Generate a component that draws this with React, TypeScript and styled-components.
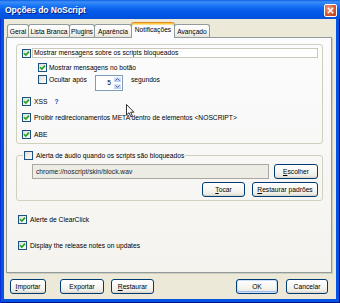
import React from "react";
import styled, { createGlobalStyle } from "styled-components";

const FONT = `"Liberation Sans", Arial, sans-serif`;

const GlobalStyle = createGlobalStyle`
  html, body { margin: 0; padding: 0; background: #ffffff; }
  body { font-family: ${FONT}; }
  *, *::before, *::after { box-sizing: border-box; }
`;

const Window = styled.div`
  position: relative;
  width: 340px;
  height: 303px;
  display: flex;
  flex-direction: column;
  background: #0553e2;
  box-shadow: inset 1px 0 0 #0831d9, inset -1px 0 0 #00138c, inset 0 -1px 0 #00138c;
  font-family: ${FONT};
  font-size: 6.7px;
  color: #000;
  overflow: hidden;
`;

const TitleBar = styled.div`
  height: 19px;
  flex: none;
  display: flex;
  align-items: center;
  justify-content: space-between;
  padding: 0 3px 0 5px;
  background: linear-gradient(
    to bottom,
    #0a5fe6 0%,
    #3d8ef7 10%,
    #1d78f5 28%,
    #0960ec 50%,
    #0156e6 75%,
    #0150d8 100%
  );
`;

const Title = styled.span`
  color: #ffffff;
  font-weight: bold;
  font-size: 8.6px;
  letter-spacing: -0.1px;
  text-shadow: 1px 1px 0 #0a1883;
`;

const CloseButton = styled.div`
  width: 13px;
  height: 13px;
  margin-top: 1px;
  border: 1px solid #ffffff;
  border-radius: 2px;
  background: radial-gradient(circle at 35% 30%, #f09a7c 0%, #d75a35 55%, #b63b18 100%);
  display: flex;
  align-items: center;
  justify-content: center;
`;

const Body = styled.div`
  flex: 1;
  margin: 0 4px 4px;
  padding: 3px 4px 0 2px;
  background: #ece9d8;
  display: flex;
  flex-direction: column;
`;

const TabRow = styled.div`
  height: 15px;
  display: flex;
  align-items: flex-end;
  padding-left: 1px;
  position: relative;
  z-index: 1;
`;

const Tab = styled.div<{ $active?: boolean; $w: number }>`
  width: ${(p) => p.$w}px;
  height: ${(p) => (p.$active ? 16 : 13)}px;
  margin-bottom: ${(p) => (p.$active ? -1 : 0)}px;
  margin-right: -1px;
  display: flex;
  align-items: center;
  justify-content: center;
  padding-bottom: ${(p) => (p.$active ? 3 : 0)}px;
  border: 1px solid #919b9c;
  border-bottom: none;
  border-top-color: ${(p) => (p.$active ? "#e68b2c" : "#919b9c")};
  border-radius: 3px 3px 0 0;
  background: ${(p) =>
    p.$active ? "#fcfcfe" : "linear-gradient(to bottom, #ffffff, #f3f2ec 70%, #e6e4da)"};
  box-shadow: ${(p) => (p.$active ? "inset 0 1px 0 #ffc83c, inset 0 2px 0 #ffdf92" : "none")};
  white-space: nowrap;
  position: relative;
  z-index: ${(p) => (p.$active ? 2 : 1)};
`;

const Panel = styled.div`
  height: 236px;
  flex: none;
  border: 1px solid #919b9c;
  background: linear-gradient(to bottom, #fcfcfe, #f4f3ee);
  box-shadow: 1px 1px 0 #d0cebf;
  padding: 6px 8px 0 9px;
  display: flex;
  flex-direction: column;
`;

const Group = styled.div`
  height: 100px;
  flex: none;
  border: 1px solid #d0d0bf;
  border-radius: 3px;
  padding: 3px 4px 0 5px;
  display: flex;
  flex-direction: column;
`;

const FieldGroup = styled.fieldset`
  margin: 7px 0 0 0;
  min-width: 0;
  border: 1px solid #d0d0bf;
  border-radius: 3px;
  padding: 4px 4px 3px 6px;
  display: flex;
  flex-direction: column;
`;

const Legend = styled.legend`
  padding: 0 1px;
  display: flex;
  align-items: center;
  gap: 3px;
  height: 9px;
  line-height: 9px;
  white-space: nowrap;
`;

const FieldBody = styled.div`
  padding-left: 9px;
  display: flex;
  flex-direction: column;
  gap: 3px;
`;

const Row = styled.div<{ $mt?: number; $ml?: number; $top?: boolean; $end?: boolean; $gap?: number }>`
  display: flex;
  align-items: ${(p) => (p.$top ? "flex-start" : "center")};
  justify-content: ${(p) => (p.$end ? "flex-end" : "flex-start")};
  gap: ${(p) => p.$gap ?? 3}px;
  margin-top: ${(p) => p.$mt ?? 0}px;
  margin-left: ${(p) => p.$ml ?? 0}px;
  min-height: 9px;
  line-height: 9px;
  white-space: nowrap;
`;

const CaptionBox = styled.div`
  flex: 1;
  height: 10px;
  margin-left: 1px;
  border: 1px solid #cac8bb;
  background: #ffffff;
  line-height: 8px;
  padding-left: 1px;
  white-space: nowrap;
`;

const Label = styled.span`
  line-height: 9px;
`;

const Help = styled.span`
  margin-left: 4px;
  color: #1a3fc4;
  font-weight: bold;
  line-height: 9px;
`;

const Box = styled.span`
  width: 9px;
  height: 9px;
  flex: none;
  border: 1px solid #1c5180;
  background: linear-gradient(135deg, #dcdcd7 0%, #ffffff 100%);
  display: flex;
  align-items: center;
  justify-content: center;
`;

const Spinner = styled.div`
  width: 28px;
  height: 16px;
  margin-left: 6px;
  flex: none;
  border: 1px solid #7f9db9;
  background: #ffffff;
  display: flex;
`;

const SpinValue = styled.span`
  flex: 1;
  text-align: right;
  padding-right: 2px;
  line-height: 14px;
`;

const SpinButtons = styled.div`
  width: 9px;
  display: flex;
  flex-direction: column;
`;

const SpinArrow = styled.div`
  flex: 1;
  background: linear-gradient(to bottom, #dde8fd, #bccff7);
  border: 1px solid #ffffff;
  display: flex;
  align-items: center;
  justify-content: center;
`;

const Suffix = styled.span`
  margin-left: 6px;
  line-height: 9px;
`;

const TextField = styled.div`
  flex: 1;
  height: 15px;
  border: 1px solid #a9a8a2;
  background: #ecebe4;
  color: #222222;
  padding-left: 3px;
  line-height: 13px;
  white-space: nowrap;
  overflow: hidden;
`;

const Button = styled.button<{ $w: number; $ml?: number; $default?: boolean }>`
  width: ${(p) => p.$w}px;
  height: 15px;
  margin-left: ${(p) => (p.$ml === undefined ? "0" : p.$ml < 0 ? "auto" : `${p.$ml}px`)};
  flex: none;
  padding: 0;
  border: 1px solid #003c74;
  border-radius: 3px;
  background: linear-gradient(to bottom, #ffffff 0%, #f6f5f0 55%, #ecebe4 85%, #d6d0c5 100%);
  box-shadow: ${(p) => (p.$default ? "inset 0 0 0 1px #cfe0fb, inset 0 -1px 0 1px #9fbcec" : "none")};
  font-family: ${FONT};
  font-size: 6.7px;
  color: #000;
  line-height: 13px;
  white-space: nowrap;
`;

const BottomBar = styled.div`
  display: flex;
  align-items: center;
  margin: 6px 4px 0 4px;
`;

const Cursor = styled.svg`
  position: absolute;
  left: 126px;
  top: 104px;
`;

const Check = ({ on }: { on?: boolean }) => (
  <Box>
    {on && (
      <svg width="7" height="7" viewBox="0 0 7 7">
        <path d="M1 3.3 L2.8 5.1 L6 1.6" fill="none" stroke="#21a121" strokeWidth="1.6" />
      </svg>
    )}
  </Box>
);

const tabs = [
  { t: "Geral", w: 22 },
  { t: "Lista Branca", w: 42 },
  { t: "Plugins", w: 26 },
  { t: "Aparência", w: 38 },
  { t: "Notificações", w: 44, active: true },
  { t: "Avançado", w: 36 },
];

export default function App() {
  return (
    <>
      <GlobalStyle />
      <Window>
        <TitleBar>
          <Title>Opções do NoScript</Title>
          <CloseButton>
            <svg width="7" height="7" viewBox="0 0 7 7">
              <path d="M0.8 0.8 L6.2 6.2 M6.2 0.8 L0.8 6.2" stroke="#ffffff" strokeWidth="1.5" />
            </svg>
          </CloseButton>
        </TitleBar>
        <Body>
          <TabRow>
            {tabs.map((tb) => (
              <Tab key={tb.t} $w={tb.w} $active={tb.active}>
                {tb.t}
              </Tab>
            ))}
          </TabRow>
          <Panel>
            <Group>
              <Row $gap={0}>
                <Check on />
                <CaptionBox>Mostrar mensagens sobre os scripts bloqueados</CaptionBox>
              </Row>
              <Row $mt={5} $ml={16} $gap={2}>
                <Check on />
                <Label>Mostrar mensagens no botão</Label>
              </Row>
              <Row $mt={3} $ml={16} $gap={2} $top>
                <Check />
                <Label>Ocultar após</Label>
                <Spinner>
                  <SpinValue>5</SpinValue>
                  <SpinButtons>
                    <SpinArrow>
                      <svg width="5" height="3" viewBox="0 0 5 3">
                        <path d="M0.5 2.6 L2.5 0.6 L4.5 2.6" fill="none" stroke="#4d6185" strokeWidth="1" />
                      </svg>
                    </SpinArrow>
                    <SpinArrow>
                      <svg width="5" height="3" viewBox="0 0 5 3">
                        <path d="M0.5 0.4 L2.5 2.4 L4.5 0.4" fill="none" stroke="#4d6185" strokeWidth="1" />
                      </svg>
                    </SpinArrow>
                  </SpinButtons>
                </Spinner>
                <Suffix>segundos</Suffix>
              </Row>
              <Row $mt={6}>
                <Check on />
                <Label>XSS</Label>
                <Help>?</Help>
              </Row>
              <Row $mt={7}>
                <Check on />
                <Label>Proibir redirecionamentos META dentro de elementos &lt;NOSCRIPT&gt;</Label>
              </Row>
              <Row $mt={8}>
                <Check on />
                <Label>ABE</Label>
              </Row>
            </Group>

            <FieldGroup>
              <Legend>
                <Check />
                <span>Alerta de áudio quando os scripts são bloqueados</span>
              </Legend>
              <FieldBody>
                <Row $gap={5}>
                  <TextField>chrome://noscript/skin/block.wav</TextField>
                  <Button $w={44}>
                    <u>E</u>scolher
                  </Button>
                </Row>
                <Row $end $gap={7}>
                  <Button $w={43}>
                    <u>T</u>ocar
                  </Button>
                  <Button $w={66}>
                    <u>R</u>estaurar padrões
                  </Button>
                </Row>
              </FieldBody>
            </FieldGroup>

            <Row $mt={14} $ml={2}>
              <Check on />
              <Label>Alerte de ClearClick</Label>
            </Row>
            <Row $mt={17} $ml={2}>
              <Check on />
              <Label>Display the release notes on updates</Label>
            </Row>
          </Panel>

          <BottomBar>
            <Button $w={36}>
              <u>I</u>mportar
            </Button>
            <Button $w={44} $ml={14}>
              Exportar
            </Button>
            <Button $w={43} $ml={7}>
              <u>R</u>estaurar
            </Button>
            <Button $w={42} $ml={-1} $default>
              OK
            </Button>
            <Button $w={42} $ml={8}>
              Cancelar
            </Button>
          </BottomBar>
        </Body>
        <Cursor width="9" height="14" viewBox="0 0 9 14">
          <path
            d="M0.5 0.5 L0.5 11 L3 8.7 L4.8 12.8 L6.4 12.1 L4.7 8.2 L7.9 8.2 Z"
            fill="#ffffff"
            stroke="#000000"
            strokeWidth="0.8"
            strokeLinejoin="miter"
          />
        </Cursor>
      </Window>
    </>
  );
}
